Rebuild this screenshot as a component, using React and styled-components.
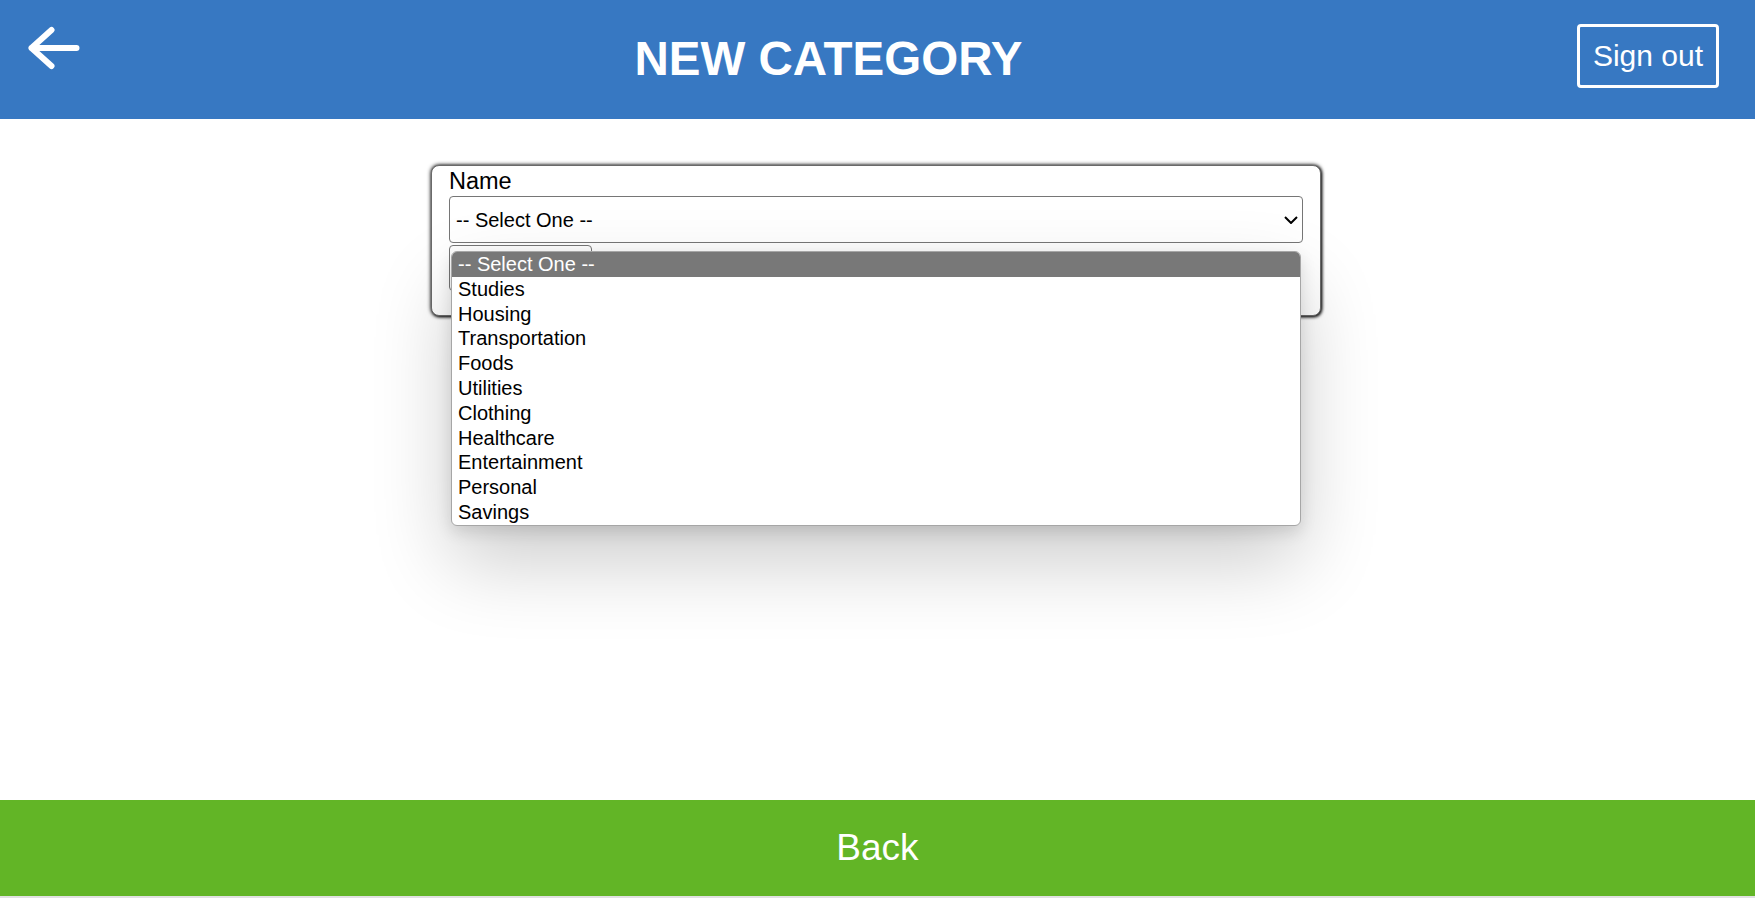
import styled, { createGlobalStyle } from 'styled-components';

const GlobalStyle = createGlobalStyle`
  html, body {
    margin: 0;
    padding: 0;
    background: #e1e1e1;
    font-family: "Liberation Sans", Arial, sans-serif;
  }
`;

const categories = [
  'Studies',
  'Housing',
  'Transportation',
  'Foods',
  'Utilities',
  'Clothing',
  'Healthcare',
  'Entertainment',
  'Personal',
  'Savings',
];

// Page frame: header, content, footer
const Page = styled.div`
  display: flex;
  flex-direction: column;
  height: 896px;
  background: #ffffff;
`;

const Header = styled.header`
  display: flex;
  align-items: flex-start;
  height: 119px;
  flex-shrink: 0;
  padding-right: 36px;
  box-sizing: border-box;
  background: #3778c2;
  color: #ffffff;
`;

const BackIcon = styled.button`
  display: flex;
  margin: 26px 0 0 28px;
  padding: 0;
  border: 0;
  background: none;
  cursor: pointer;
`;

const Title = styled.h1`
  flex: 1;
  margin: 32px 0 0;
  font-size: 47.5px;
  font-weight: 700;
  line-height: 54px;
  text-align: center;
`;

const SignOut = styled.button`
  margin-top: 24px;
  height: 64px;
  padding: 0 13px;
  border: 3px solid #ffffff;
  border-radius: 4px;
  background: transparent;
  color: #ffffff;
  font-family: inherit;
  font-size: 30px;
  cursor: pointer;
`;

const Main = styled.main`
  flex: 1;
  display: flex;
  flex-direction: column;
  align-items: center;
  padding: 46px 3px 0 0;
`;

// Form card
const Card = styled.form`
  width: 890px;
  box-sizing: border-box;
  padding: 0 17px 24px;
  border: 1px solid #6a6a6a;
  border-radius: 8px;
  background: #ffffff;
  box-shadow: 0 0 4px #000000, 1px 1px 3px rgba(0, 0, 0, 0.8);
`;

const Label = styled.label`
  display: block;
  font-size: 23.5px;
  line-height: 30px;
  color: #000000;
`;

const SelectWrap = styled.div`
  position: relative;
`;

const Select = styled.select`
  display: block;
  width: 100%;
  height: 47px;
  padding: 0 6px;
  border: 1px solid #767676;
  border-radius: 4px;
  background: #ffffff;
  color: #000000;
  font-family: inherit;
  font-size: 20px;
  appearance: none;
  outline: none;
`;

const Chevron = styled.svg`
  position: absolute;
  right: 5px;
  top: 20px;
  pointer-events: none;
`;

// Open option list of the select, lying over the card
const OptionList = styled.ul`
  position: absolute;
  z-index: 2;
  top: calc(100% + 8px);
  left: 2px;
  right: 2px;
  margin: 0;
  padding: 0;
  list-style: none;
  border: 1px solid #a6a6a6;
  border-radius: 6px;
  overflow: hidden;
  background: #ffffff;
  box-shadow: 0 36px 80px rgba(0, 0, 0, 0.2), 0 6px 16px rgba(0, 0, 0, 0.12);
`;

const OptionItem = styled.li`
  height: 24.8px;
  padding: 0 6px;
  font-size: 20px;
  line-height: 24.8px;
  color: ${(p) => (p.$active ? '#ffffff' : '#000000')};
  background: ${(p) => (p.$active ? '#787878' : 'transparent')};
  white-space: nowrap;
`;

const SaveButton = styled.button`
  display: block;
  width: 143px;
  height: 46px;
  margin-top: 2px;
  border: 1px solid #767676;
  border-radius: 4px;
  background: #ffffff;
`;

const Footer = styled.footer`
  display: flex;
  align-items: center;
  justify-content: center;
  height: 96px;
  flex-shrink: 0;
  background: #62b526;
  color: #ffffff;
  font-size: 37px;
  cursor: pointer;
`;

const ArrowLeft = () => (
  <svg width="52" height="44" viewBox="0 0 52 44" fill="none">
    <path
      d="M3.5 22 H48.5 M23.5 4 L3.5 22 L23.5 40"
      stroke="#ffffff"
      strokeWidth="6"
      strokeLinecap="round"
      strokeLinejoin="round"
    />
  </svg>
);

const App = () => {
  return (
    <>
      <GlobalStyle />
      <Page>
        <Header>
          <BackIcon type="button" aria-label="Back">
            <ArrowLeft />
          </BackIcon>
          <Title>NEW CATEGORY</Title>
          <SignOut type="button">Sign out</SignOut>
        </Header>
        <Main>
          <Card onSubmit={(e) => e.preventDefault()}>
            <Label htmlFor="name">Name</Label>
            <SelectWrap>
              <Select id="name" defaultValue="">
                <option value="">-- Select One --</option>
                {categories.map((c) => (
                  <option key={c} value={c}>
                    {c}
                  </option>
                ))}
              </Select>
              <Chevron width="14" height="8" viewBox="0 0 14 8" fill="none">
                <path d="M1 1 L7 7 L13 1" stroke="#000" strokeWidth="2" />
              </Chevron>
              <OptionList role="listbox">
                <OptionItem $active>-- Select One --</OptionItem>
                {categories.map((c) => (
                  <OptionItem key={c}>{c}</OptionItem>
                ))}
              </OptionList>
            </SelectWrap>
            <SaveButton type="submit" aria-label="Save" />
          </Card>
        </Main>
        <Footer>Back</Footer>
      </Page>
    </>
  );
};

export default App;
